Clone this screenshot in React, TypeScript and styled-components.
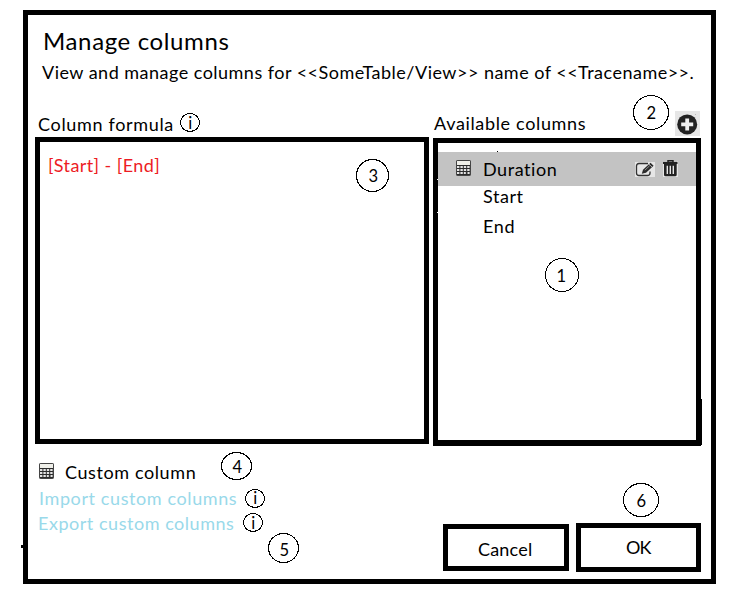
import React from "react";
import styled, { createGlobalStyle } from "styled-components";

const GlobalStyle = createGlobalStyle`
  * { box-sizing: border-box; }
  body {
    margin: 0;
    background: #fff;
    color: #000;
    font-family: Lato, "Liberation Sans", sans-serif;
    font-size: 18px;
    line-height: 24px;
  }
`;

const Page = styled.main`
  width: 735px;
  height: 600px;
  padding: 10px 0 0 23px;
  overflow: hidden;
`;

const Dialog = styled.section`
  position: relative;
  width: 693px;
  height: 574px;
  border: 5px solid #000;
  padding-top: 10px;
`;

const Title = styled.h1`
  margin: 0 0 3px 15px;
  font-size: 24px;
  font-weight: 400;
  line-height: 32px;
  letter-spacing: 0.63px;
  white-space: nowrap;
`;

const Subtitle = styled.p`
  margin: 0 0 27px 14px;
  letter-spacing: 0.48px;
  white-space: nowrap;
`;

const Label = styled.span<{ $spacing?: number }>`
  letter-spacing: ${(p) => p.$spacing ?? 0}px;
  white-space: nowrap;
`;

const Columns = styled.div`
  display: grid;
  grid-template-columns: 394px 268px;
  column-gap: 4px;
  margin-left: 7px;
`;

const ColumnHeader = styled.header<{ $height: number; $top: number; $left: number }>`
  display: flex;
  height: ${(p) => p.$height}px;
  padding: ${(p) => p.$top}px 1px 0 ${(p) => p.$left}px;
`;

const Panel = styled.div<{ $height: number; $bottom: number }>`
  height: ${(p) => p.$height}px;
  border: 5px solid #000;
  border-bottom-width: ${(p) => p.$bottom}px;
`;

const Formula = styled.div`
  padding: 11px 0 0 8px;
  color: #ed1c24;
`;

const List = styled.ul`
  margin: 0;
  padding: 9px 0 0;
  list-style: none;
`;

const Item = styled.li<{ $selected?: boolean; $height: number; $line?: number }>`
  display: flex;
  height: ${(p) => p.$height}px;
  padding: ${(p) => (p.$selected ? "5px 18px 0 18px" : "0 18px 0 45px")};
  background: ${(p) => (p.$selected ? "#c3c3c3" : "transparent")};
  line-height: ${(p) => p.$line ?? 24}px;
`;

const ItemName = styled(Label)`
  margin-left: 12px;
  flex: 1;
`;

const Actions = styled.div`
  display: flex;
  gap: 8px;
  padding-top: 3px;
`;

const IconButton = styled.button`
  display: block;
  padding: 0;
  border: 0;
  height: fit-content;
  background: #e6e6e6;
  line-height: 0;
`;

const EditButton = styled(IconButton)`
  margin-top: 2px;
`;

const AddButton = styled(IconButton)`
  margin-left: auto;
  height: 25px;
`;

const Footer = styled.footer`
  display: flex;
  justify-content: space-between;
  padding: 14px 10px 0 10px;
`;

const Legend = styled.div`
  display: flex;
  flex-direction: column;
`;

const LegendRow = styled.div<{ $height: number; $left: number }>`
  display: flex;
  height: ${(p) => p.$height}px;
  padding-left: ${(p) => p.$left}px;
`;

const LegendName = styled(Label)`
  margin-left: 11px;
`;

const LinkText = styled(Label)`
  color: #99d9ea;
`;

const Buttons = styled.div`
  display: flex;
  gap: 7px;
  padding-top: 63px;
`;

const DialogButton = styled.button<{ $width: number; $height: number; $top: number; $left: number }>`
  width: ${(p) => p.$width}px;
  height: ${(p) => p.$height}px;
  margin-top: ${(p) => (p.$height === 47 ? 1 : 0)}px;
  padding: ${(p) => p.$top}px 0 0 ${(p) => p.$left}px;
  display: flex;
  align-items: flex-start;
  border: 5px solid #000;
  border-radius: 0;
  background: #fff;
  color: #000;
  font: inherit;
`;

/* Numbered callouts float over the dialog contents. */
const Callout = styled.div<{ $x: number; $y: number; $w: number; $h: number }>`
  position: absolute;
  left: ${(p) => p.$x - 28}px;
  top: ${(p) => p.$y - 15}px;
  width: ${(p) => p.$w}px;
  height: ${(p) => p.$h}px;
`;

const RingSvg = styled.svg`
  display: block;
`;

const RingText = styled.span<{ $x: number; $y: number }>`
  position: absolute;
  left: ${(p) => p.$x}px;
  top: ${(p) => p.$y - 19}px;
  transform: scaleX(0.92);
`;

const Speck = styled.i<{ $x: number; $y: number; $w: number; $h: number; $light?: boolean }>`
  position: absolute;
  left: ${(p) => p.$x - 28}px;
  top: ${(p) => p.$y - 15}px;
  width: ${(p) => p.$w}px;
  height: ${(p) => p.$h}px;
  background: ${(p) => (p.$light ? "#fff" : "#000")};
`;

type RingProps = { x: number; y: number; w: number; h: number; tx: number; base: number; children: string };

const Ring = ({ x, y, w, h, tx, base, children }: RingProps) => (
  <Callout $x={x} $y={y} $w={w} $h={h}>
    <RingSvg width={w} height={h} shapeRendering="crispEdges">
      <ellipse cx={w / 2} cy={h / 2} rx={(w - 1) / 2} ry={(h - 1) / 2} fill="none" stroke="#000" strokeWidth="1.1" />
    </RingSvg>
    <RingText $x={tx - x} $y={base - y}>{children}</RingText>
  </Callout>
);

const CalcSvg = styled.svg`
  display: block;
  flex: none;
  margin-top: 3px;
`;

const CalculatorIcon = () => (
  <CalcSvg width="15" height="16" viewBox="0 0 15 16">
    <rect x="0.5" y="0.5" width="14" height="15" rx="0.8" fill="#2b2b2b" stroke="#444" />
    <rect x="1" y="1" width="13" height="4" fill="#efefe9" />
    {[6, 9, 12].map((y) =>
      [1, 4.4, 7.8, 11.2].map((x) => <rect key={`${x}-${y}`} x={x} y={y} width="2.4" height="2" fill="#e4e4e4" />)
    )}
    <rect x="9.8" y="12" width="1.6" height="2" fill="#333" />
  </CalcSvg>
);

const EditIcon = () => (
  <svg width="20" height="15" viewBox="0 0 20 15">
    <path d="M13 1.5H4Q1.5 1.5 1.5 4V11Q1.5 13.5 4 13.5H12.5Q15 13.5 15 11V9.5" fill="none" stroke="#333" strokeWidth="1.3" />
    <path d="M6.8 11.8L8 7.7L15.5 0.8L18.6 3.7L11 10.8Z" fill="#2b2b2b" />
    <path d="M9.8 8.2L14.6 3.8" stroke="#aaa" strokeWidth="0.8" />
    <path d="M14 2.2L17.1 5.1" stroke="#e6e6e6" strokeWidth="0.7" />
  </svg>
);

const TrashIcon = () => (
  <svg width="15" height="17" viewBox="0 0 15 17">
    <path d="M0 0H15V1H0Z" fill="#c3c3c3" />
    <path d="M5 2.5V0.8H10V2.5" fill="none" stroke="#222" strokeWidth="1.5" />
    <path d="M0 1.8H14.5V4H0Z" fill="#222" />
    <path d="M1 4H13.7V14.8Q13.7 16.3 12.2 16.3H2.5Q1 16.3 1 14.8Z" fill="#222" />
    <path d="M4.3 5.8V14M7.3 5.8V14M10.3 5.8V14" stroke="#e6e6e6" strokeWidth="1.4" />
  </svg>
);

const PlusIcon = () => (
  <svg width="25" height="25" viewBox="0 0 25 25">
    <circle cx="12.2" cy="13.4" r="10" fill="#222" />
    <path d="M12.2 7.4V19.4M6.2 13.4H18.2" stroke="#f0f0f0" strokeWidth="3.8" />
    <rect x="20" y="3" width="1" height="1" fill="#bbb" />
  </svg>
);

export default function App() {
  return (
    <>
      <GlobalStyle />
      <Page>
        <Dialog>
          <Title>Manage columns</Title>
          <Subtitle>{"View and manage columns for <<SomeTable/View>> name of <<Tracename>>."}</Subtitle>
          <Columns>
            <div>
              <ColumnHeader $height={26} $top={1} $left={3}>
                <Label $spacing={0.67}>Column formula</Label>
              </ColumnHeader>
              <Panel $height={307} $bottom={5}>
                <Formula><Label $spacing={0.42}>[Start] - [End]</Label></Formula>
              </Panel>
            </div>
            <div>
              <ColumnHeader $height={27} $top={0} $left={1}>
                <Label $spacing={0.66}>Available columns</Label>
                <AddButton aria-label="Add column"><PlusIcon /></AddButton>
              </ColumnHeader>
              <Panel $height={308} $bottom={6}>
                <List>
                  <Item $selected $height={34}>
                    <CalculatorIcon />
                    <ItemName $spacing={0.55}>Duration</ItemName>
                    <Actions>
                      <EditButton aria-label="Edit"><EditIcon /></EditButton>
                      <IconButton aria-label="Delete"><TrashIcon /></IconButton>
                    </Actions>
                  </Item>
                  <Item $height={28} $line={20}><Label $spacing={0.55}>Start</Label></Item>
                  <Item $height={30}><Label $spacing={0.6}>End</Label></Item>
                </List>
              </Panel>
            </div>
          </Columns>
          <Footer>
            <Legend>
              <LegendRow $height={26} $left={1}>
                <CalculatorIcon />
                <LegendName $spacing={0.6}>Custom column</LegendName>
              </LegendRow>
              <LegendRow $height={25} $left={1}><LinkText $spacing={0.6}>Import custom columns</LinkText></LegendRow>
              <LegendRow $height={24} $left={0}><LinkText $spacing={0.53}>Export custom columns</LinkText></LegendRow>
            </Legend>
            <Buttons>
              <DialogButton $width={126} $height={47} $top={8} $left={30}><Label $spacing={0.2}>Cancel</Label></DialogButton>
              <DialogButton $width={125} $height={49} $top={7} $left={45}><Label $spacing={-1}>OK</Label></DialogButton>
            </Buttons>
          </Footer>

          <Ring x={180} y={113} w={20} h={19} tx={188} base={129}>i</Ring>
          <Ring x={245} y={489} w={20} h={19} tx={253} base={504}>i</Ring>
          <Ring x={243} y={513} w={20} h={19} tx={251} base={529}>i</Ring>
          <Ring x={545} y={258} w={34} h={34} tx={556} base={282}>1</Ring>
          <Ring x={633} y={95} w={36} h={35} tx={646} base={119}>2</Ring>
          <Ring x={356} y={159} w={33} h={33} tx={368} base={182}>3</Ring>
          <Ring x={221} y={452} w={31} h={28} tx={232} base={473}>4</Ring>
          <Ring x={268} y={533} w={31} h={30} tx={279} base={556}>5</Ring>
          <Ring x={623} y={483} w={36} h={34} tx={636} base={507}>6</Ring>

          <Speck $x={701} $y={399} $w={1} $h={46} />
          <Speck $x={497} $y={151} $w={1} $h={1} />
          <Speck $x={21} $y={545} $w={2} $h={3} />
          <Speck $x={437} $y={179} $w={1} $h={1} $light />
          <Speck $x={437} $y={212} $w={1} $h={1} $light />
        </Dialog>
      </Page>
    </>
  );
}
